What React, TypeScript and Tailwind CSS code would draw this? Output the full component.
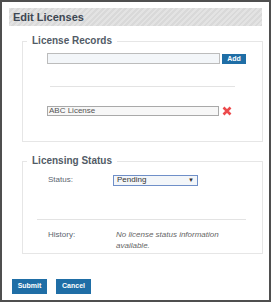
import React from "react";

export default function App() {
  const font = { fontFamily: '"Liberation Sans", Arial, sans-serif' };
  return (
    <div style={font} className="w-[271px] h-[302px] bg-white border-2 border-[#4f4f4f] box-border overflow-hidden text-[#555]">
      <div className="pt-[6px] px-[7px]">
        <div className="h-[18px] flex items-center pl-[4px] bg-[repeating-linear-gradient(135deg,#e3e3e3_0px,#e3e3e3_2px,#d9d9d9_2px,#d9d9d9_4px)]">
          <span className="text-[11px] font-bold text-[#3d4753]">Edit Licenses</span>
        </div>
      </div>

      <fieldset className="ml-[20px] mr-[6px] mt-[9px] border border-[#e6e6e6] h-[107px]">
        <legend className="ml-[4px] px-[5px] text-[10px] font-bold text-[#525b66] leading-[12px]">License Records</legend>
        <div className="flex items-center pl-[24px] mt-[6px]">
          <div className="w-[173px] h-[11px] border border-[#bcbcbc] bg-[#f3f6f9]" />
          <button className="ml-[2px] w-[24px] h-[10px] bg-[#1f6ea6] text-white text-[7px] font-bold leading-[10px]">Add</button>
        </div>
        <div className="ml-[27px] w-[185px] mt-[22px] h-px bg-[#e3e3e3]" />
        <div className="flex items-center pl-[24px] mt-[19px]">
          <div className="w-[172px] h-[10px] border border-[#a9a9a9] bg-[#f7f7f7] text-[8px] leading-[8px] pl-[1px] text-[#555]">ABC License</div>
          <svg width="10" height="10" viewBox="0 0 10 10" className="ml-[3px]">
            <path d="M1.5 1.5 L8.5 8.5 M8.5 1.5 L1.5 8.5" stroke="#ec4a4c" strokeWidth="2.6" strokeLinecap="butt" />
          </svg>
        </div>
      </fieldset>

      <fieldset className="ml-[20px] mr-[6px] mt-[13px] border border-[#e6e6e6] h-[99px]">
        <legend className="ml-[4px] px-[5px] text-[10px] font-bold text-[#525b66] leading-[12px]">Licensing Status</legend>
        <div className="flex items-center mt-[7px] text-[8px]">
          <span className="w-[90px] pl-[25px] text-[#5b6570]">Status:</span>
          <div className="w-[85px] h-[11px] border border-[#6f8fc8] bg-[#f3f6f9] flex items-center justify-between px-[3px] text-[8px] text-[#333]">
            <span>Pending</span>
            <span className="text-[6px]">▼</span>
          </div>
        </div>
        <div className="ml-[14px] w-[209px] mt-[33px] h-px bg-[#e3e3e3]" />
        <div className="flex mt-[9px] text-[8px] leading-[11px]">
          <span className="w-[93px] pl-[25px] text-[#5b6570]">History:</span>
          <span className="italic text-[#666] w-[110px]">No license status information available.</span>
        </div>
      </fieldset>

      <div className="flex gap-[9px] pl-[10px] mt-[25px]">
        <button className="w-[35px] h-[15px] bg-[#1f6ea6] text-white text-[7px] font-bold">Submit</button>
        <button className="w-[35px] h-[15px] bg-[#1f6ea6] text-white text-[7px] font-bold">Cancel</button>
      </div>
    </div>
  );
}
